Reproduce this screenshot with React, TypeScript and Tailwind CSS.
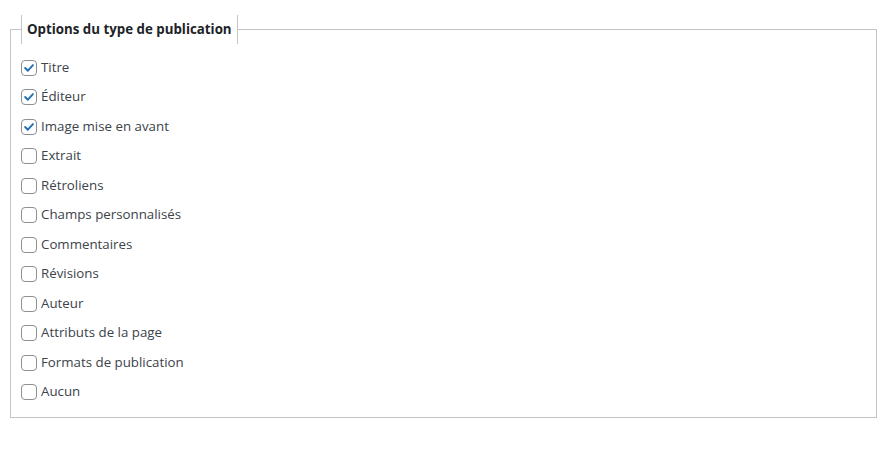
import React from 'react';

const options = [
  { label: 'Titre', checked: true },
  { label: 'Éditeur', checked: true },
  { label: 'Image mise en avant', checked: true },
  { label: 'Extrait', checked: false },
  { label: 'Rétroliens', checked: false },
  { label: 'Champs personnalisés', checked: false },
  { label: 'Commentaires', checked: false },
  { label: 'Révisions', checked: false },
  { label: 'Auteur', checked: false },
  { label: 'Attributs de la page', checked: false },
  { label: 'Formats de publication', checked: false },
  { label: 'Aucun', checked: false },
];

function Checkbox({ checked }: { checked: boolean }) {
  return (
    <span className="flex-shrink-0 w-4 h-4 rounded-[4px] border border-[#8c8f94] bg-white flex items-center justify-center">
      {checked && (
        <svg viewBox="0 0 16 16" className="w-4 h-4" fill="none">
          <path d="M3.6 8 L6.7 11.1 L12.5 4.7" stroke="#2271b1" strokeWidth="2.2" strokeLinecap="round" strokeLinejoin="round" />
        </svg>
      )}
    </span>
  );
}

export default function App() {
  return (
    <div className="w-[887px] h-[464px] bg-white pt-[15px] px-[10px] text-[13.3px] text-[#3c434a]" style={{ fontFamily: '"Open Sans", "Noto Sans", sans-serif' }}>
      <fieldset className="border border-[#c3c4c7] px-[10px] pb-[10px] w-[867px]">
        <legend className="border-x border-[#c3c4c7] px-[5px] h-[29px] leading-[29px] font-bold text-[#1d2327]">
          Options du type de publication
        </legend>
        <div className="mt-[9px] flex flex-col">
          {options.map((o) => (
            <label key={o.label} className="flex items-center h-[29.5px] gap-[4px]">
              <Checkbox checked={o.checked} />
              <span>{o.label}</span>
            </label>
          ))}
        </div>
      </fieldset>
    </div>
  );
}
